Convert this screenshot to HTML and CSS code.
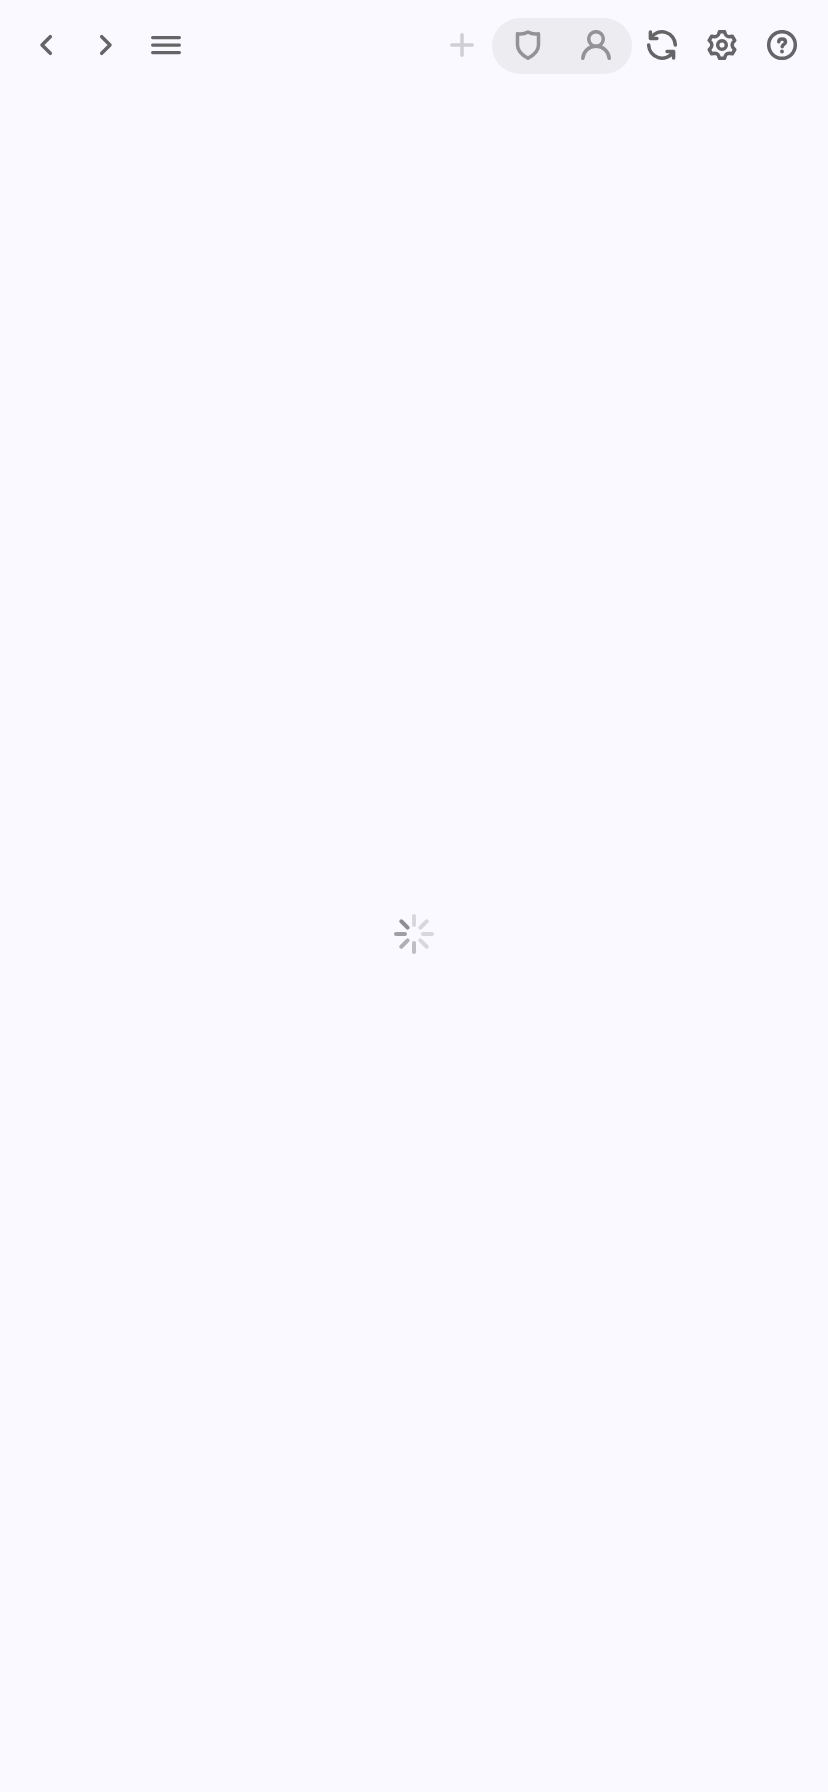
FILE: index.html
```html
<!DOCTYPE html>
<html lang="en">
<head>
<meta charset="utf-8">
<meta name="viewport" content="width=device-width, initial-scale=1">
<title>Loading</title>
<link rel="stylesheet" href="styles.css">
</head>
<body>
<header class="toolbar">
  <nav class="group" aria-label="Navigation">
    <button class="tool" type="button" aria-label="Back">
      <svg class="icon" viewBox="0 0 30 30"><path d="M19.300 6.700 11 15l8.300 8.300"/></svg>
    </button>
    <button class="tool" type="button" aria-label="Forward">
      <svg class="icon" viewBox="0 0 30 30"><path d="M10.700 6.700 19 15l-8.300 8.300"/></svg>
    </button>
    <button class="tool" type="button" aria-label="Menu">
      <svg class="icon menu" viewBox="0 0 30 30"><path d="M1.600 7.600h26.800M1.600 15.100h26.800M1.600 22.600h26.800"/></svg>
    </button>
  </nav>
  <div class="group">
    <button class="tool faint" type="button" aria-label="Add">
      <svg class="icon" viewBox="0 0 30 30"><path d="M15 4.800v20.400M4.800 15h20.400"/></svg>
    </button>
    <div class="pill">
      <button class="tool" type="button" aria-label="Protection">
        <svg class="icon" viewBox="0 0 30 30"><path d="M15 1.900C12.400 3.500 8.500 4.400 4.500 3.700V15c0 6.200 4 9.800 10.500 13.200C21.500 24.800 25.500 21.200 25.500 15V3.700C21.500 4.400 17.600 3.500 15 1.900z"/></svg>
      </button>
      <button class="tool" type="button" aria-label="Account">
        <svg class="icon" viewBox="0 0 30 30"><circle cx="15" cy="9" r="7.300"/><path d="M1.800 28.300c.6-7.200 6.200-12 13.200-12s12.600 4.800 13.200 12"/></svg>
      </button>
    </div>
    <button class="tool" type="button" aria-label="Refresh">
      <svg class="icon" viewBox="0 0 30 30"><path d="M28.300 15A13.300 13.300 0 0 0 3.800 8M1.700 15A13.300 13.300 0 0 0 26.200 22M3.400 2v6.500h6.500M26.600 28v-6.500h-6.500"/></svg>
    </button>
    <button class="tool" type="button" aria-label="Settings">
      <svg class="icon" viewBox="0 0 30 30"><path d="M12.500 1.700h5L18.500 4.500Q19.780 6.730 22.370 6.770L25.290 6.220 27.750 10.470 25.800 12.730Q24.550 15 25.800 17.270L27.750 19.530 25.290 23.780 22.370 23.230Q19.780 23.270 18.500 25.500L17.500 28.300h-5L11.500 25.500Q10.220 23.270 7.630 23.230L4.710 23.780 2.250 19.530 4.200 17.270Q5.450 15 4.200 12.730L2.250 10.470 4.710 6.220 7.630 6.770Q10.220 6.730 11.500 4.500z"/><circle cx="15" cy="15" r="4.300"/></svg>
    </button>
    <button class="tool" type="button" aria-label="Help">
      <svg class="icon" viewBox="0 0 30 30"><circle cx="15" cy="15" r="13.300"/><path d="M11.700 11.800c.4-3.800 6.800-3.600 6.800.1 0 2.500-3.300 2.500-3.300 4.900"/><circle class="dot" cx="15" cy="21.500" r="1.900"/></svg>
    </button>
  </div>
</header>
<main class="content">
  <svg class="spinner" viewBox="-20 -20 40 40" role="img" aria-label="Loading">
    <path class="s1" d="M0-18v9"/>
    <path class="s1" d="M0-18v9" transform="rotate(45)"/>
    <path class="s1" d="M0-18v9" transform="rotate(90)"/>
    <path class="s1" d="M0-18v9" transform="rotate(135)"/>
    <path class="s2" d="M0-18v9" transform="rotate(180)"/>
    <path class="s3" d="M0-18v9" transform="rotate(225)"/>
    <path class="s4" d="M0-18v9" transform="rotate(270)"/>
    <path class="s5" d="M0-18v9" transform="rotate(315)"/>
  </svg>
</main>
</body>
</html>
```
FILE: styles.css
```css
* {
  box-sizing: border-box;
}

body {
  margin: 0;
  min-height: 100vh;
  display: flex;
  flex-direction: column;
  background: #faf9ff;
  font-family: "Liberation Sans", sans-serif;
}

.toolbar {
  display: flex;
  justify-content: space-between;
  padding: 18px 16px 2px;
}

.group {
  display: flex;
  align-items: flex-start;
}

.tool {
  display: flex;
  align-items: center;
  justify-content: center;
  width: 60px;
  height: 54px;
  padding: 0;
  border: 0;
  background: none;
  color: #656567;
}

.faint {
  color: #cfced3;
}

.pill {
  display: flex;
  height: 56px;
  padding: 0 2px;
  border-radius: 28px;
  background: #edecf1;
}

.pill .tool {
  width: 68px;
  color: #939396;
}

.icon {
  width: 30px;
  height: 30px;
  fill: none;
  stroke: currentColor;
  stroke-width: 3.5;
  stroke-linecap: round;
  stroke-linejoin: round;
}

.menu {
  stroke-width: 3.2;
}

.dot {
  fill: currentColor;
  stroke: none;
}

.content {
  flex: 1;
  display: flex;
  align-items: center;
  justify-content: center;
}

.spinner {
  width: 40px;
  height: 40px;
  fill: none;
  stroke-width: 4;
  stroke-linecap: round;
}

.s1 { stroke: #d7d7dc; }
.s2 { stroke: #bebec3; }
.s3 { stroke: #b0b0b4; }
.s4 { stroke: #a0a0a4; }
.s5 { stroke: #8e8e92; }
```
